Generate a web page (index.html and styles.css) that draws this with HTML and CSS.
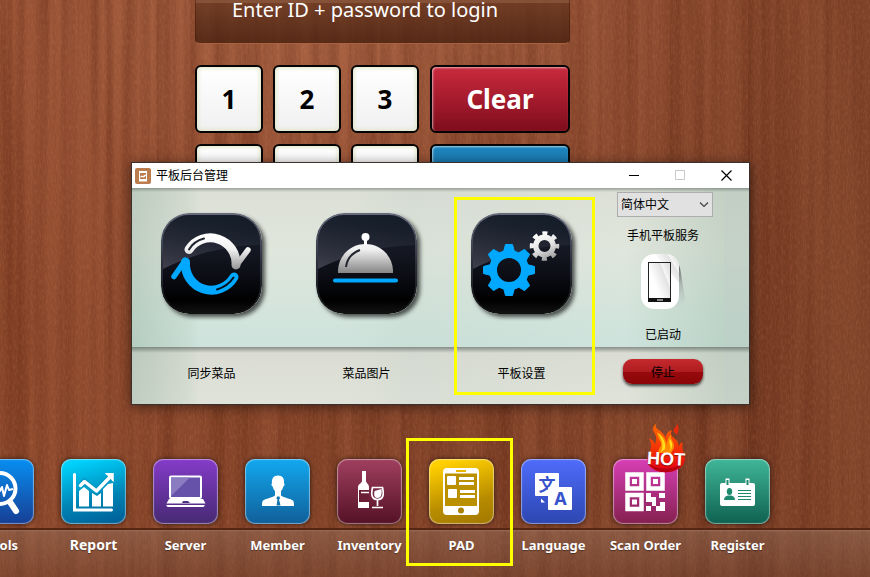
FILE: index.html
```
<!DOCTYPE html>
<html lang="en">
<head>
<meta charset="utf-8">
<meta name="viewport" content="width=device-width, initial-scale=1">
<title>POS Login</title>
<link rel="stylesheet" href="styles.css">
</head>
<body>
<svg class="grain" aria-hidden="true" preserveAspectRatio="none">
  <filter id="long" x="0" y="0" width="100%" height="100%" color-interpolation-filters="sRGB">
    <feTurbulence type="fractalNoise" baseFrequency=".08 .0015" numOctaves="4" seed="8"/>
    <feColorMatrix values="0 0 0 0 .33  0 0 0 0 .12  0 0 0 0 .05  .8 0 0 0 -.27"/>
  </filter>
  <filter id="fine" x="0" y="0" width="100%" height="100%" color-interpolation-filters="sRGB">
    <feTurbulence type="fractalNoise" baseFrequency=".6 .2" numOctaves="2" seed="3"/>
    <feColorMatrix values="0 0 0 0 .9  0 0 0 0 .6  0 0 0 0 .4  .3 0 0 0 -.12"/>
  </filter>
  <rect width="100%" height="100%" filter="url(#long)"/>
  <rect width="100%" height="100%" filter="url(#fine)"/>
</svg>

<main class="login">
  <p class="prompt">Enter ID + password to login</p>
  <div class="keypad">
    <button class="key">1</button>
    <button class="key">2</button>
    <button class="key">3</button>
    <button class="key key-clear">Clear</button>
    <button class="key" aria-label="4"></button>
    <button class="key" aria-label="5"></button>
    <button class="key" aria-label="6"></button>
    <button class="key key-enter" aria-label="Enter"></button>
  </div>
</main>

<section class="window" role="dialog" aria-labelledby="window-title">
  <header class="titlebar">
    <svg class="app-icon" width="16" height="16" viewBox="0 0 16 16" aria-hidden="true">
      <rect width="16" height="16" rx="2" fill="#bc7d4e"/>
      <path d="M4 3h8v10.500H4z" fill="#fff"/>
      <path d="M5 5h6v1.500l-1.500.5L8 8 6.500 7.500 5 9zM5 11V9.500l2-.5 2 .5 2-2V11z" fill="#bc7d4e"/>
    </svg>
    <h1 id="window-title" class="window-title">平板后台管理</h1>
    <button class="caption" aria-label="Minimize"><svg width="11" height="11" viewBox="0 0 11 11"><path d="M0 5.500h10" stroke="#000"/></svg></button>
    <button class="caption" aria-label="Maximize" disabled><svg width="11" height="11" viewBox="0 0 11 11"><path d="M.5.500h9v9h-9z" fill="none" stroke="#c8c8c8"/></svg></button>
    <button class="caption" aria-label="Close"><svg width="11" height="11" viewBox="0 0 11 11"><path d="M.5.500l10 10M10.500.500l-10 10" stroke="#000" stroke-width="1.200"/></svg></button>
  </header>
  <div class="window-body">
    <svg width="0" height="0" class="defs" aria-hidden="true">
      <defs>
        <linearGradient id="tile" x2="0" y2="1"><stop stop-color="#121b26"/><stop offset=".35" stop-color="#151823"/><stop offset=".65" stop-color="#0b0c13"/><stop offset=".88" stop-color="#000"/><stop offset="1" stop-color="#111"/></linearGradient>
        <linearGradient id="gloss" x1=".6" x2=".2" y2="1"><stop stop-color="#1a2430" stop-opacity=".3"/><stop offset="1" stop-color="#3d3c4a"/></linearGradient>
        <linearGradient id="rim" x2="0" y2="1"><stop stop-color="#676b7c"/><stop offset=".5" stop-color="#2c2f3b"/><stop offset="1" stop-color="#111"/></linearGradient>
        <linearGradient id="silver" gradientUnits="userSpaceOnUse" x1="0" y1="24" x2="0" y2="60"><stop stop-color="#fff"/><stop offset=".35" stop-color="#f0f0f0"/><stop offset="1" stop-color="#858585"/></linearGradient>
        <linearGradient id="silver-gear" gradientUnits="userSpaceOnUse" x1="68" y1="20" x2="80" y2="47"><stop stop-color="#fff"/><stop offset=".5" stop-color="#e4e4e4"/><stop offset="1" stop-color="#999"/></linearGradient>
        <g id="tile-base">
          <rect width="101" height="101" rx="28" fill="url(#rim)"/>
          <rect x="2" y="2" width="97" height="97" rx="26" fill="url(#tile)"/>
          <path d="M2 56V28A26 26 0 0 1 28 2H73A26 26 0 0 1 99 28V32Q48 33 2 56z" fill="url(#gloss)"/>
        </g>
      </defs>
    </svg>
    <button class="action">
      <svg class="tile" width="101" height="101" viewBox="0 0 101 101" aria-hidden="true">
        <use href="#tile-base"/>
        <g fill="none" stroke-linecap="round" stroke-linejoin="round">
          <path d="M28 36.500A25.600 25.600 0 0 1 75 52" stroke="url(#silver)" stroke-width="9"/>
          <path d="M75 53L87 37" stroke="url(#silver)" stroke-width="5.500"/>
          <path d="M28 36.500Q33 28 43 25.500" stroke="#222630" stroke-width="2"/>
          <path d="M73 64A26 26 0 0 1 24.500 49" stroke="#00a8ff" stroke-width="9"/>
          <path d="M24 47.500L13 63.500" stroke="#00a8ff" stroke-width="5.500"/>
          <path d="M72.500 64.500Q67 73 56 76.500" stroke="#06101b" stroke-width="2"/>
        </g>
      </svg>
      <span>同步菜品</span>
    </button>
    <button class="action">
      <svg class="tile" width="101" height="101" viewBox="0 0 101 101" aria-hidden="true">
        <use href="#tile-base"/>
        <circle cx="49.500" cy="24" r="4" fill="#fff"/>
        <path d="M48 27h3v5h-3z" fill="#fff"/>
        <path d="M22 60V57C23 42 35 31 49.500 31S76 42 77 57v3z" fill="url(#silver)"/>
        <path d="M30 54C31 46 36 40 44 37" fill="none" stroke="#23262f" stroke-width="2"/>
        <rect x="17" y="65.500" width="65" height="4" rx="2" fill="#00a8ff"/>
      </svg>
      <span>菜品图片</span>
    </button>
    <button class="action action-marked">
      <svg class="tile" width="101" height="101" viewBox="0 0 101 101" aria-hidden="true">
        <defs><path id="tooth" d="M-5.500-18L-3.500-25.500H3.500L5.500-18z" stroke-linejoin="round" stroke-width="1"/></defs>
        <use href="#tile-base"/>
        <g transform="translate(38 57)" fill="#00a8ff" stroke="#00a8ff">
          <circle r="16" fill="none" stroke-width="8"/>
          <use href="#tooth"/><use href="#tooth" transform="rotate(45)"/><use href="#tooth" transform="rotate(90)"/><use href="#tooth" transform="rotate(135)"/><use href="#tooth" transform="rotate(180)"/><use href="#tooth" transform="rotate(225)"/><use href="#tooth" transform="rotate(270)"/><use href="#tooth" transform="rotate(315)"/>
        </g>
        <g fill="none" stroke="url(#silver-gear)">
          <circle cx="73.500" cy="33" r="8.700" stroke-width="5.400"/>
          <circle cx="73.500" cy="33" r="12.500" stroke-width="4.500" stroke-dasharray="4.900 4.917" stroke-dashoffset="2.450"/>
        </g>
      </svg>
      <span>平板设置</span>
    </button>
    <div class="service">
      <div class="language">
        <select aria-label="语言"><option>简体中文</option></select>
        <svg class="chevron" width="10" height="6" viewBox="0 0 10 6" aria-hidden="true"><path d="M1 .5l4 4 4-4" fill="none" stroke="#444" stroke-width="1.200"/></svg>
      </div>
      <p class="service-name">手机平板服务</p>
      <svg class="phone" width="44" height="56" viewBox="0 0 44 56" aria-hidden="true">
        <defs>
          <linearGradient id="paper" x1="0" y1=".8" x2="1" y2=".1"><stop offset=".3" stop-color="#fff"/><stop offset=".72" stop-color="#e2e2e2"/><stop offset=".74" stop-color="#f6f6f6"/><stop offset="1" stop-color="#ddd"/></linearGradient>
          <linearGradient id="curl" x2="0" y2="1"><stop stop-color="#444"/><stop offset=".5" stop-color="#aab4b0"/><stop offset="1" stop-color="#c5d8d2" stop-opacity=".3"/></linearGradient>
        </defs>
        <path d="M33 4Q39 9 40 20L44 44Q44 54 32 54z" fill="url(#curl)"/>
        <rect width="38" height="55" rx="13" fill="#fff"/>
        <path d="M14 0H25A13 13 0 0 1 38 13V29z" fill="url(#paper)"/>
        <rect x="7.500" y="8.500" width="22" height="39" fill="url(#paper)" stroke="#222"/>
        <path d="M7 44h23v4H7z" fill="#111"/><path d="M16 46h6" stroke="#fff"/>
      </svg>
      <p class="service-state">已启动</p>
      <button class="stop">停止</button>
    </div>
  </div>
</section>

<nav class="dock">
  <a class="app" href="#tools">
    <svg class="icon tools" width="65" height="65" viewBox="0 0 65 65" aria-hidden="true">
      <g fill="none" stroke="#fff" stroke-width="4"><circle cx="31" cy="29.500" r="15.500"/><path d="M41 43l6 9" stroke-width="6" stroke-linecap="round"/><path d="M20 31h6l3-7 2 8 2-4 2 9 3-11 2 5 4-1" stroke-width="2" stroke-linejoin="round"/></g>
    </svg><span>Tools</span>
  </a>
  <a class="app" href="#report">
    <svg class="icon report" width="65" height="65" viewBox="0 0 65 65" aria-hidden="true">
      <g fill="#fff"><path d="M12 15q1.500-2 3 0v34.500h36q2 1.500 0 3H12z"/><path d="M18 32l5-4 5 4v15.500H18zM31 34l5 3 4-3v13.500h-9zM42 30l5-5 5-1v23.500H42zM44 14h8.500v9z"/></g>
      <path d="M19.500 26.500l4-4 12 9.500L49 18" fill="none" stroke="#0098c4" stroke-width="6"/>
      <path d="M19.500 26.500l4-4 12 9.500L49 18" fill="none" stroke="#fff" stroke-width="3.500" stroke-linecap="round" stroke-linejoin="round"/>
      <path d="M44 14h8.500v9z" fill="#fff"/>
    </svg><span class="large">Report</span>
  </a>
  <a class="app" href="#server">
    <svg class="icon server" width="65" height="65" viewBox="0 0 65 65" aria-hidden="true">
      <rect x="17" y="17.500" width="31" height="21.500" rx="1" fill="#6652a8" stroke="#fff" stroke-width="2"/>
      <path d="M18 18.500h19L18 37z" fill="#8b7cc2"/>
      <path d="M16 40h34l2.500 4.500h-39zM13 46h39l-1.500 2h-36z" fill="#fff"/><path d="M30 42h5l2 2h-8z" fill="#4f3280"/>
    </svg><span>Server</span>
  </a>
  <a class="app" href="#member">
    <svg class="icon member" width="65" height="65" viewBox="0 0 65 65" aria-hidden="true">
      <path d="M33 16.500c4.500 0 6.500 3 6 7.500 1 1 .5 3-.7 3.500-.5 2.500-1.300 3.500-2.300 4.500v4.500c2.500 2 10 3.500 12 5 1 1 1 3.500 1 5.500H17c0-2 0-4.500 1-5.500 2-1.500 9.500-3 12-5V32c-1-1-1.800-2-2.300-4.500-1.200-.5-1.700-2.500-.7-3.500-.5-4.500 1.500-7.500 6-7.500z" fill="#fff"/>
      <path d="M32 37.500h2.500l.5 2-1 1 1.500 6h-4l1-6-1-1z" fill="#1272ad"/>
    </svg><span>Member</span>
  </a>
  <a class="app" href="#inventory">
    <svg class="icon inventory" width="65" height="65" viewBox="0 0 65 65" aria-hidden="true">
      <path d="M25 12h4v10c0 2 3 3 3 6v21H21V28c0-3 4-4 4-6z" fill="#fff"/>
      <path d="M22 31h10v12H22z" fill="#6a1f36"/><path d="M24 33.500h8" stroke="#fff" stroke-width="1.500"/>
      <path d="M35.500 28.500h10c1.500 7 1 12-5 12s-6.500-5-5-12zM40.500 41v6M35 48.500h11" fill="none" stroke="#fff" stroke-width="1.700"/>
      <path d="M37.500 32l7-2c.5 5 0 9-4 9s-3.500-4-3-7z" fill="#fff"/>
    </svg><span>Inventory</span>
  </a>
  <a class="app app-marked" href="#pad">
    <svg class="icon pad" width="65" height="65" viewBox="0 0 65 65" aria-hidden="true">
      <rect x="14" y="9" width="36" height="47" rx="4" fill="#fff"/>
      <rect x="27" y="11" width="10" height="2" fill="#eab700"/>
      <path d="M16 14.500h32V47H16z" fill="#bb9000"/>
      <g fill="#fff"><rect x="18" y="17" width="9" height="9" rx="1"/><rect x="19" y="30" width="9" height="9" rx="1"/><path d="M30 18h15v3H30zM30 23h15v3H30zM31 31h15v3H31zM31 36h15v3H31z"/></g>
      <circle cx="32" cy="51.500" r="3" fill="#a98200"/>
    </svg><span>PAD</span>
  </a>
  <a class="app" href="#language">
    <svg class="icon lang" width="65" height="65" viewBox="0 0 65 65" aria-hidden="true">
      <rect x="14" y="14" width="24" height="23" rx="1" fill="#fff"/><text x="26" y="32" class="glyph-han">文</text>
      <rect x="27" y="28" width="24" height="23" rx="1" fill="#fff"/><text x="39.500" y="46" class="glyph-latin">A</text>
      <path d="M20 39.500v4h4z" fill="#fff"/>
    </svg><span>Language</span>
  </a>
  <a class="app" href="#scan">
    <svg class="icon scan" width="65" height="65" viewBox="0 0 65 65" aria-hidden="true">
      <g fill="none" stroke="#fff" stroke-width="4.500"><path d="M14.500 15.500h14v14h-14zM35.500 15.500h14v14h-14zM14.500 36h14v14h-14z"/></g>
      <path d="M19 20h5v5h-5zM40 20h5v5h-5zM19 40.500h5v5h-5zM33 34h5v4h5v9h-4v-4h-6zM46 34h6v5h-6zM33 47h5v5h-5zM43 47h4v-4h5v9h-9z" fill="#fff"/>
    </svg><span>Scan Order</span>
    <svg class="hot" width="42" height="54" viewBox="0 0 42 54" role="img" aria-label="Hot">
      <defs><linearGradient id="fire" x2="0" y2="1"><stop stop-color="#ff6a00"/><stop offset=".6" stop-color="#f22a08"/><stop offset="1" stop-color="#e50014"/></linearGradient></defs>
      <path d="M11 2C5 6 7 10 9 13c2 4 1 8 0 10-1-3-3-5-6-5 3 4 2 8 1 13C0 37 0 44 7 48c8 5 20 4 27-1 6-4 6-12 3-17-1-3-1-6 0-9-3 1-4 3-4 5-1-5-2-7-5-9-4-3-3-6-2-8-4 1-7 5-6 9-1-4-4-7-7-9C9 7 9 4 11 2z" fill="url(#fire)"/>
      <path d="M31 2c1 4-5 5-3 9l3 3c1-3 3-6 0-12z" fill="#e62b0b"/>
      <path d="M11 11c5 2 9 7 10 13 0-5 1-8 4-10-1 5 4 7 3 13l-3 5H13c-2-4 3-6 2-10-1-3-4-6-4-11z" fill="#ff8c00"/>
      <path d="M12 12c5 4 8 9 7 16l-4 3c3-7 1-12-3-19zM24 18c-2 5 2 7 0 12 3-4 3-8 0-12z" fill="#ffe01a"/>
      <path d="M3 43c9 6 23 6 33 0-7 11-26 11-33 0z" fill="#b90012"/>
      <text x="20" y="44" class="hot-text" transform="rotate(3 21 40)">HOT</text>
    </svg>
  </a>
  <a class="app" href="#register">
    <svg class="icon register" width="65" height="65" viewBox="0 0 65 65" aria-hidden="true">
      <path d="M17 24h31q2 0 2 2v19q0 2-2 2H17q-2 0-2-2V26q0-2 2-2z" fill="#fff"/>
      <path d="M20.500 19.500h4V26h-4zM40.500 19.500h4V26h-4z" fill="#fff"/><path d="M22.500 21v5M42.500 21v5" stroke="#1d8a6e" stroke-width="2"/>
      <ellipse cx="24.500" cy="32.500" rx="2.700" ry="3.500" fill="#1d8a6e"/><path d="M19 41c0-3 2-4 4-4.500h3c2 .5 4 1.500 4 4.500z" fill="#1d8a6e"/>
      <path d="M33 31.500h13M33 34.500h13M33 37.500h13M33 40.500h13" stroke="#1d8a6e"/>
    </svg><span>Register</span>
  </a>
</nav>
</body>
</html>
```
FILE: styles.css
```
* {
  box-sizing: border-box;
}

body {
  position: relative;
  display: flex;
  flex-direction: column;
  min-height: 100vh;
  margin: 0;
  overflow: hidden;
  font-family: "Noto Sans", "Noto Sans CJK SC", sans-serif;
  background:
    linear-gradient(90deg, transparent 18%, rgba(60, 15, 0, .12) 18%, transparent 22%, transparent 47%, rgba(60, 15, 0, .12) 47%, transparent 50%, transparent 77%, rgba(60, 15, 0, .12) 77%, transparent 83%, transparent 86%, rgba(60, 15, 0, .2) 86%, transparent 90%),
    radial-gradient(ellipse 560px 420px at 38% -6%, #ad6747, rgba(156, 86, 57, .5) 60%, transparent),
    linear-gradient(100deg, #924c2e, #87472d 55%, #80442b);
}

button,
select {
  font: inherit;
}

p {
  margin: 0;
}

.grain {
  position: absolute;
  inset: 0;
  z-index: -1;
  width: 100%;
  height: 100%;
}

/* Login pane */
.login {
  width: 375px;
  margin-left: 195px;
}

.prompt {
  padding: 0 36px 23px;
  border: 1px solid rgba(60, 20, 5, .4);
  border-top: 0;
  border-bottom-color: #a9623f;
  border-radius: 0 0 5px 5px;
  background: linear-gradient(rgba(130, 80, 55, .9) 3px, rgba(100, 52, 30, .75) 3px, rgba(70, 32, 15, .8));
  color: #fff;
  font-size: 20px;
  line-height: 20px;
  white-space: nowrap;
}

.keypad {
  display: grid;
  grid-template-columns: repeat(3, 68px) 1fr;
  gap: 11px 10px;
  margin-top: 21px;
}

.key {
  height: 68px;
  padding: 0;
  border: 2px solid #050505;
  border-radius: 6px;
  background: linear-gradient(#fff, #f0f0f0);
  box-shadow: inset 0 0 4px 1px #dfe5c4;
  color: #000;
  font-size: 26px;
  font-weight: 700;
}

.key-clear {
  margin-left: 1px;
  background: linear-gradient(#c92a3d, #a51b2d 50%, #7e0d1c);
  box-shadow: inset 1px 1px 2px rgba(255, 255, 255, .6);
  color: #fff;
}

.key-enter {
  margin-left: 1px;
  background: linear-gradient(#1e87c0, #0f5785);
  box-shadow: inset 1px 1px 2px rgba(255, 255, 255, .6);
}

/* Floating management window */
.window {
  position: absolute;
  top: 162px;
  left: 131px;
  width: 619px;
  border: 1px solid #3b302b;
  box-shadow: 0 2px 12px rgba(0, 0, 0, .5);
  color: #000;
  font-size: 12px;
  line-height: 16px;
}

.titlebar {
  display: flex;
  align-items: center;
  height: 25px;
  padding-left: 3px;
  background: #fff;
}

.window-title {
  flex: 1;
  margin: 0 0 0 5px;
  font-size: 12px;
  font-weight: 400;
}

.caption {
  display: grid;
  place-items: center;
  width: 46px;
  height: 25px;
  padding: 0;
  border: 0;
  background: none;
}

.window-body {
  display: grid;
  grid-template-columns: repeat(3, 155px) 1fr;
  height: 216px;
  padding-left: 2px;
  background:
    linear-gradient(rgba(60, 70, 65, .4), transparent 4px),
    linear-gradient(transparent 159px, rgba(70, 80, 75, .55) 159px, transparent 165px),
    linear-gradient(90deg, rgba(150, 178, 160, .45), rgba(180, 200, 185, .25) 9%, transparent 11%, transparent 35%, rgba(180, 200, 190, .15) 45%, transparent 80%, rgba(150, 180, 160, .35) 96%, rgba(170, 190, 180, .5) 96%),
    linear-gradient(#dcdfd6, #e0e6dc 60px, #cde3dc 159px, #dadcd3 159px, #e0e3da);
}

.defs {
  position: absolute;
}

.action {
  position: relative;
  display: flex;
  flex-direction: column;
  align-items: center;
  gap: 52px;
  padding: 25px 0 0;
  border: 0;
  background: none;
  color: inherit;
}

.tile {
  display: block;
  border-radius: 28px;
  box-shadow: 3px 3px 4px rgba(0, 0, 0, .65);
}

.action-marked::after {
  content: "";
  position: absolute;
  inset: 9px 4px 9px 10px;
  border: 3px solid #ff0;
}

.service {
  display: flex;
  flex-direction: column;
  align-items: center;
  padding: 4px 40px 0 18px;
}

.language {
  position: relative;
  align-self: stretch;
  margin-right: -4px;
}

.language select {
  display: block;
  width: 100%;
  height: 25px;
  padding: 0 3px;
  border: 1px solid #adadad;
  border-radius: 0;
  background: #e1e1e1;
  color: #000;
  appearance: none;
}

.chevron {
  position: absolute;
  top: 10px;
  right: 4px;
}

.service-name {
  margin-top: 11px;
}

.phone {
  margin-top: 10px;
}

.service-state {
  margin-top: 17px;
}

.stop {
  width: 80px;
  height: 25px;
  margin-top: 16px;
  padding: 2px 0 0;
  border: 0;
  border-radius: 9px;
  background: linear-gradient(#c42a2e, #b01c20 50%, #960a0d 52%, #8c0508);
  box-shadow: 0 2px 3px rgba(0, 0, 0, .7);
  color: #000;
}

/* Application dock */
.dock {
  display: grid;
  grid-template-columns: repeat(9, 65px);
  gap: 27px;
  height: 118px;
  margin-top: auto;
  margin-left: -31px;
  background: linear-gradient(transparent 69px, #562613 69px, #562613 71px, #966c57 71px, rgba(150, 118, 100, .4) 73px, rgba(110, 70, 52, .4));
}

.app {
  position: relative;
  display: flex;
  flex-direction: column;
  align-items: center;
  gap: 12px;
  color: #fff;
  font-size: 13px;
  font-weight: 700;
  line-height: 18px;
  text-decoration: none;
  text-shadow: 0 1px 1px rgba(0, 0, 0, .4);
  white-space: nowrap;
}

.large {
  font-size: 14px;
}

.icon {
  flex: none;
  border-radius: 10px;
  box-shadow: inset 0 0 1px 1px rgba(255, 255, 255, .45), 0 0 5px rgba(0, 0, 0, .6);
}

.tools { background: linear-gradient(#078ff2, #173e94); }
.report { background: linear-gradient(165deg, #00d0fa 10%, #0083b4 60%, #005c94); }
.server { background: linear-gradient(#843bc9, #462a72); }
.member { background: linear-gradient(#12a8ef, #105f99); }
.inventory { background: linear-gradient(#a03f5f, #541126); }
.pad { background: linear-gradient(165deg, #ffcf00 10%, #b88c00 65%, #a17700); }
.lang { background: linear-gradient(#4f6cfb, #2c46b0); }
.scan { background: linear-gradient(#d83fb6, #84204f); }
.register { background: linear-gradient(#40b698, #0e6150); }

.app-marked::after {
  content: "";
  position: absolute;
  inset: -21px -19px 11px -23px;
  border: 3px solid #ff0;
}

.glyph-han,
.glyph-latin {
  fill: #3753cb;
  text-anchor: middle;
  text-shadow: none;
}

.glyph-han {
  font-size: 17px;
}

.glyph-latin {
  font-size: 18px;
}

.hot {
  position: absolute;
  top: -38px;
  left: 33px;
}

.hot-text {
  fill: #fff;
  font-family: "Liberation Sans", sans-serif;
  font-size: 18px;
  text-anchor: middle;
}
```
